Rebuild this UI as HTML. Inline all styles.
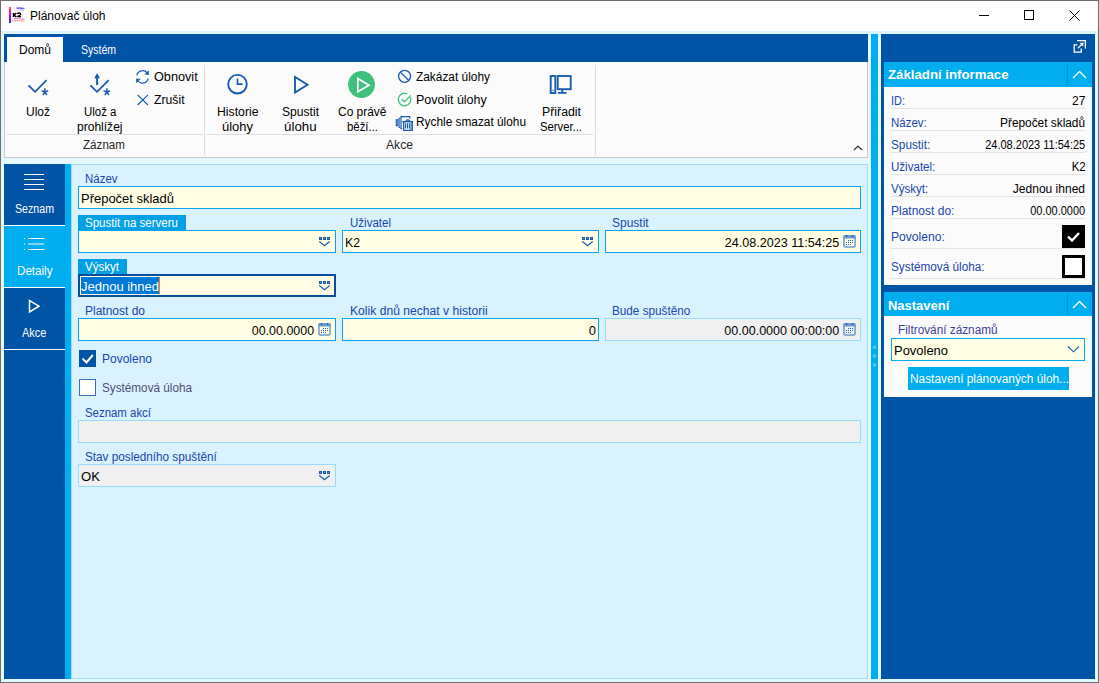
<!DOCTYPE html>
<html><head><meta charset="utf-8"><style>
html,body{margin:0;padding:0;width:1099px;height:683px;overflow:hidden;background:#fff;}
body{position:relative;font-family:"Liberation Sans",sans-serif;}
.a{position:absolute;}
.t{white-space:nowrap;}
svg.a{overflow:visible;}
</style></head><body>
<div class="a" style="left:0px;top:0px;width:1099px;height:683px;background:#6e6e6e;"></div>
<div class="a" style="left:1px;top:1px;width:1097px;height:681px;background:#e4f8ff;"></div>
<div class="a" style="left:1px;top:1px;width:1097px;height:30px;background:#ffffff;"></div>
<div class="a" style="left:1px;top:31px;width:1097px;height:2px;background:#d8f4fd;"></div>
<svg class="a" style="left:9px;top:7px" width="16" height="16" viewBox="0 0 16 16"><defs><linearGradient id="g1" x1="0" y1="0" x2="0" y2="1"><stop offset="0" stop-color="#f55"/><stop offset="0.5" stop-color="#d0d"/><stop offset="1" stop-color="#22e"/></linearGradient></defs><rect x="2" y="0.5" width="13.5" height="15" fill="#f6f5fa"/><rect x="0" y="0" width="2" height="16" fill="url(#g1)"/><path d="M7.5 1.2 Q11 0.6 15.5 1.6" stroke="#66e" stroke-width="1.4" fill="none"/><path d="M10.5 2.6 Q13 2.6 15 3.6" stroke="#b9f" stroke-width="0.8" fill="none"/><path d="M5 11.5 Q9 10.5 15.5 12.5" stroke="#f6c" stroke-width="0.9" fill="none"/><path d="M2.5 14 Q9 13 15.5 14" stroke="#fa8" stroke-width="1" fill="none"/><path d="M4.5 6 V10 M7.4 6 L5.1 8 L7.4 10" stroke="#000" stroke-width="1.4" fill="none"/><path d="M8.3 6.7 Q9 6 10.2 6 Q11.6 6 11.6 7.2 Q11.6 8 8.3 9.6 H12" stroke="#000" stroke-width="1.3" fill="none"/></svg>
<div class="a t" style="top:7.84px;font-size:12px;line-height:16px;color:#000;left:29.5px;transform-origin:left 50%;transform:scaleX(1.0015)">Plánovač úloh</div>
<svg class="a" style="left:970px;top:0px" width="129" height="31"><path d="M9 15.5h10" stroke="#000" stroke-width="1"/><rect x="54.5" y="10.5" width="9" height="9" fill="none" stroke="#000" stroke-width="1"/><path d="M99.5 10.5l10 10M109.5 10.5l-10 10" stroke="#000" stroke-width="1"/></svg>
<div class="a" style="left:4px;top:34px;width:864px;height:28px;background:#0054a6;"></div>
<div class="a" style="left:7px;top:37px;width:56px;height:25px;background:#fbfbfb;"></div>
<div class="a t" style="top:41.84px;font-size:12px;line-height:16px;color:#000;left:18.5px;transform-origin:left 50%;transform:scaleX(0.9995)">Domů</div>
<div class="a t" style="top:41.84px;font-size:12px;line-height:16px;color:#fff;left:80.5px;transform-origin:left 50%;transform:scaleX(0.8747)">Systém</div>
<div class="a" style="left:4px;top:62px;width:864px;height:96px;background:#fbfbfb;border-left:1px solid #c9c9c9;border-right:1px solid #c9c9c9;border-bottom:1px solid #c9c9c9;box-sizing:border-box;"></div>
<div class="a" style="left:7px;top:134px;width:196px;height:1px;background:#dedede;"></div>
<div class="a" style="left:204px;top:65px;width:1px;height:90px;background:#dedede;"></div>
<div class="a" style="left:207px;top:134px;width:386px;height:1px;background:#dedede;"></div>
<div class="a" style="left:595px;top:65px;width:1px;height:90px;background:#dedede;"></div>
<div class="a t" style="top:103.84px;font-size:12px;line-height:16px;color:#000;left:25.5px;transform-origin:left 50%;transform:scaleX(0.9993)">Ulož</div>
<div class="a t" style="top:103.84px;font-size:12px;line-height:16px;color:#000;left:83.5px;transform-origin:left 50%;transform:scaleX(0.9554)">Ulož a</div>
<div class="a t" style="top:118.84px;font-size:12px;line-height:16px;color:#000;left:77px;transform-origin:left 50%;transform:scaleX(1.0031)">prohlížej</div>
<div class="a t" style="top:68.84px;font-size:12px;line-height:16px;color:#000;left:153.7px;transform-origin:left 50%;transform:scaleX(1.0566)">Obnovit</div>
<div class="a t" style="top:91.84px;font-size:12px;line-height:16px;color:#000;left:153.7px;transform-origin:left 50%;transform:scaleX(1.0200)">Zrušit</div>
<div class="a t" style="top:136.84px;font-size:12px;line-height:16px;color:#262626;left:82.5px;transform-origin:left 50%;transform:scaleX(0.9686)">Záznam</div>
<div class="a t" style="top:103.84px;font-size:12px;line-height:16px;color:#000;left:216.5px;transform-origin:left 50%;transform:scaleX(1.0200)">Historie</div>
<div class="a t" style="top:118.84px;font-size:12px;line-height:16px;color:#000;left:222px;transform-origin:left 50%;transform:scaleX(1.0806)">úlohy</div>
<div class="a t" style="top:103.84px;font-size:12px;line-height:16px;color:#000;left:281.5px;transform-origin:left 50%;transform:scaleX(1.0085)">Spustit</div>
<div class="a t" style="top:118.84px;font-size:12px;line-height:16px;color:#000;left:283.5px;transform-origin:left 50%;transform:scaleX(1.1132)">úlohu</div>
<div class="a t" style="top:103.84px;font-size:12px;line-height:16px;color:#000;left:337.5px;transform-origin:left 50%;transform:scaleX(0.9958)">Co právě</div>
<div class="a t" style="top:118.84px;font-size:12px;line-height:16px;color:#000;left:346.5px;transform-origin:left 50%;transform:scaleX(0.9484)">běží...</div>
<div class="a t" style="top:68.84px;font-size:12px;line-height:16px;color:#000;left:415.5px;transform-origin:left 50%;transform:scaleX(0.9904)">Zakázat úlohy</div>
<div class="a t" style="top:91.84px;font-size:12px;line-height:16px;color:#000;left:415.5px;transform-origin:left 50%;transform:scaleX(1.0390)">Povolit úlohy</div>
<div class="a t" style="top:113.84px;font-size:12px;line-height:16px;color:#000;left:415.5px;transform-origin:left 50%;transform:scaleX(0.9875)">Rychle smazat úlohu</div>
<div class="a t" style="top:103.84px;font-size:12px;line-height:16px;color:#000;left:541.5px;transform-origin:left 50%;transform:scaleX(1.0259)">Přiřadit</div>
<div class="a t" style="top:118.84px;font-size:12px;line-height:16px;color:#000;left:539.5px;transform-origin:left 50%;transform:scaleX(0.9399)">Server...</div>
<div class="a t" style="top:136.84px;font-size:12px;line-height:16px;color:#262626;left:385.5px;transform-origin:left 50%;transform:scaleX(1.0117)">Akce</div>
<svg class="a" style="left:0;top:0" width="868" height="160" fill="none" stroke="#1b5cb0">
<path d="M28.5 85.3 L35.1 91.8 L46.6 80.2" stroke-width="1.8"/>
<path d="M44.9 88.3 V92 M41.6 90.8 L44.9 92 L48.2 90.8 M42.8 95 L44.9 92 L47 95" stroke-width="1.5"/>
<path d="M90.4 85.3 L97 91.8 L108.7 80.2" stroke-width="1.8"/>
<path d="M97.1 85 V77" stroke-width="2"/><path d="M94.2 78.3 L97.1 73 L100 78.3 Z" fill="#1b5cb0" stroke="none"/>
<path d="M106.9 88.3 V92 M103.6 90.8 L106.9 92 L110.2 90.8 M104.8 95 L106.9 92 L109 95" stroke-width="1.5"/>
<path d="M136.8 75.5 A6 6 0 0 1 147.3 72.8" stroke-width="1.15"/><path d="M148.8 70.3 L148.8 75 L144.4 74.6 Z" fill="#1b5cb0" stroke="none"/>
<path d="M148.2 78.5 A6 6 0 0 1 137.7 80.9" stroke-width="1.15"/><path d="M136.1 83.2 L136.1 78.5 L140.5 78.9 Z" fill="#1b5cb0" stroke="none"/>
<path d="M137.6 94.8 L148 105 M148 94.8 L137.6 105" stroke-width="1.15"/>
<circle cx="237.5" cy="84.2" r="9.3" stroke-width="1.9"/><path d="M237.5 78.4 V84.2 H242.6" stroke-width="1.7"/>
<path d="M295 77 V92.5 L307.5 84.7 Z" stroke-width="1.9" stroke-linejoin="miter"/>
<circle cx="361.5" cy="84.5" r="13.4" fill="#3ec17c" stroke="none"/>
<path d="M357.8 78.6 V91.8 L369 85.2 Z" stroke="#fff" stroke-width="1.7"/>
<circle cx="404.6" cy="76.3" r="6" stroke-width="1.3"/><path d="M400.4 72.1 L408.8 80.5" stroke-width="1.3"/>
<path d="M410.5 97.35 A6.3 6.3 0 1 1 407.26 93.79" stroke="#3ec17c" stroke-width="1.3"/><path d="M401.8 99.2 L404.4 101.8 L410.8 95.4" stroke="#3ec17c" stroke-width="1.3"/>
<rect x="396.3" y="119.7" width="1.5" height="6" stroke-width="1.1"/>
<path d="M400.2 118.2 H399.1 V127.5 H400.2" stroke-width="1.1"/>
<path d="M409.7 118.4 V116.7 H401 V128.6 H402.2" stroke-width="1.2"/>
<path d="M402.4 121.7 H413" stroke-width="1.5"/>
<path d="M405.8 121 Q407.8 118.8 409.8 121" stroke-width="1.2"/>
<rect x="409.8" y="122.4" width="2.4" height="7.5" fill="#8cb0dc" stroke="none"/>
<path d="M403.7 122 V130.3 H412.2 V122" stroke-width="1.3"/>
<path d="M405.6 123.3 V128.5 M407.5 123.3 V128.5 M409.4 123.3 V128.5" stroke-width="1.1"/>
<rect x="550.7" y="76" width="4.6" height="17" stroke-width="1.9"/>
<path d="M552.3 90.3 H553.8" stroke-width="1"/>
<rect x="557.7" y="76" width="13" height="13.2" stroke-width="1.9"/>
<path d="M562.2 90 V92.5 M557.9 92.9 H566.6" stroke-width="1.9"/>
<path d="M854 150 L858 146 L862 150" stroke="#333" stroke-width="1.2"/>
</svg>
<div class="a" style="left:871px;top:34px;width:7px;height:645px;background:#00adef;"></div>
<div class="a" style="left:881px;top:34px;width:214px;height:645px;background:#0054a6;"></div>
<div class="a" style="left:4px;top:164px;width:61px;height:515px;background:#0054a6;"></div>
<div class="a" style="left:65px;top:164px;width:6px;height:515px;background:#00adef;"></div>
<div class="a" style="left:4px;top:226px;width:61px;height:61px;background:#00adef;"></div>
<div class="a" style="left:4px;top:225px;width:61px;height:1px;background:#ffffff;"></div>
<div class="a" style="left:4px;top:287px;width:61px;height:1px;background:#ffffff;"></div>
<div class="a" style="left:4px;top:349px;width:61px;height:1px;background:#ffffff;"></div>
<svg class="a" style="left:0;top:160px" width="70" height="200" fill="none" stroke="#fff">
<path d="M24 14.5 H44 M24 19.5 H44 M24 24.5 H44 M24 29.5 H44" stroke-width="1.2"/>
<path d="M28 78.5 H44 M28 84 H44 M28 89.5 H44" stroke-width="1.2"/>
<path d="M24 78.5 H25.2 M24 84 H25.2 M24 89.5 H25.2" stroke-width="1.2"/>
<path d="M29.5 140.5 V152 L39 146.2 Z" stroke-width="1.5"/>
</svg>
<div class="a t" style="top:200.84px;font-size:12px;line-height:16px;color:#fff;left:15px;transform-origin:left 50%;transform:scaleX(0.8857)">Seznam</div>
<div class="a t" style="top:262.84px;font-size:12px;line-height:16px;color:#fff;left:17px;transform-origin:left 50%;transform:scaleX(0.9676)">Detaily</div>
<div class="a t" style="top:324.84px;font-size:12px;line-height:16px;color:#fff;left:21.7px;transform-origin:left 50%;transform:scaleX(0.9180)">Akce</div>
<div class="a" style="left:71px;top:164px;width:797px;height:515px;background:#d9f2fd;box-shadow:inset 0 0 0 1px #9fdcf7;"></div>
<div class="a t" style="top:170.84px;font-size:12px;line-height:16px;color:#2146ae;left:85px;transform-origin:left 50%;transform:scaleX(0.9554)">Název</div>
<div class="a" style="left:78px;top:186px;width:783px;height:23px;background:#fffee4;box-shadow:inset 0 0 0 1px #0aa4f2;"></div>
<div class="a t" style="top:190.00px;font-size:13px;line-height:17px;color:#000;left:81px;transform-origin:left 50%;transform:scaleX(0.9975)">Přepočet skladů</div>
<div class="a" style="left:78px;top:215px;width:108px;height:15px;background:#03a0e6;"></div>
<div class="a t" style="top:214.84px;font-size:12px;line-height:16px;color:#fff;left:84.5px;transform-origin:left 50%;transform:scaleX(0.9616)">Spustit na serveru</div>
<div class="a" style="left:78px;top:230px;width:258px;height:23px;background:#fffee4;box-shadow:inset 0 0 0 1px #0aa4f2;"></div>
<div class="a t" style="top:214.84px;font-size:12px;line-height:16px;color:#2146ae;left:349.5px;transform-origin:left 50%;transform:scaleX(0.9605)">Uživatel</div>
<div class="a" style="left:342px;top:230px;width:257px;height:23px;background:#fffee4;box-shadow:inset 0 0 0 1px #0aa4f2;"></div>
<div class="a t" style="top:234.00px;font-size:13px;line-height:17px;color:#000;left:345px;transform-origin:left 50%;transform:scaleX(0.9430)">K2</div>
<div class="a t" style="top:214.84px;font-size:12px;line-height:16px;color:#2146ae;left:612px;transform-origin:left 50%;transform:scaleX(1.0003)">Spustit</div>
<div class="a" style="left:605px;top:230px;width:256px;height:23px;background:#fffee4;box-shadow:inset 0 0 0 1px #0aa4f2;"></div>
<div class="a t" style="top:234.00px;font-size:13px;line-height:17px;color:#000;right:260px;transform-origin:right 50%;transform:scaleX(0.9676)">24.08.2023 11:54:25</div>
<div class="a" style="left:78px;top:259px;width:49px;height:15px;background:#03a0e6;"></div>
<div class="a t" style="top:258.84px;font-size:12px;line-height:16px;color:#fff;left:85px;transform-origin:left 50%;transform:scaleX(0.9620)">Výskyt</div>
<div class="a" style="left:78px;top:274px;width:258px;height:23px;background:#fffee4;box-shadow:inset 0 0 0 1px #0054a6;box-shadow:inset 0 0 0 2px #0a4f9f;"></div>
<div class="a" style="left:81px;top:277px;width:78px;height:17px;background:#0078d7;"></div>
<div class="a t" style="top:278.00px;font-size:13px;line-height:17px;color:#fff;left:80.7px;transform-origin:left 50%;transform:scaleX(0.9990)">Jednou ihned</div>
<div class="a" style="left:159px;top:277px;width:1px;height:17px;background:#f08020;"></div>
<div class="a t" style="top:302.84px;font-size:12px;line-height:16px;color:#2146ae;left:85px;transform-origin:left 50%;transform:scaleX(0.9992)">Platnost do</div>
<div class="a" style="left:78px;top:318px;width:258px;height:23px;background:#fffee4;box-shadow:inset 0 0 0 1px #0aa4f2;"></div>
<div class="a t" style="top:322.00px;font-size:13px;line-height:17px;color:#000;right:785px;transform-origin:right 50%;transform:scaleX(0.9573)">00.00.0000</div>
<div class="a t" style="top:302.84px;font-size:12px;line-height:16px;color:#2146ae;left:349.5px;transform-origin:left 50%;transform:scaleX(1.0112)">Kolik dnů nechat v historii</div>
<div class="a" style="left:342px;top:318px;width:257px;height:23px;background:#fffee4;box-shadow:inset 0 0 0 1px #0aa4f2;"></div>
<div class="a t" style="top:322.00px;font-size:13px;line-height:17px;color:#000;right:503px;">0</div>
<div class="a t" style="top:302.84px;font-size:12px;line-height:16px;color:#2146ae;left:612px;transform-origin:left 50%;transform:scaleX(0.9767)">Bude spuštěno</div>
<div class="a" style="left:605px;top:318px;width:256px;height:23px;background:#f0f0f0;box-shadow:inset 0 0 0 1px #96dbfa;"></div>
<div class="a t" style="top:322.00px;font-size:13px;line-height:17px;color:#000;right:260px;transform-origin:right 50%;transform:scaleX(0.9641)">00.00.0000 00:00:00</div>
<div class="a" style="left:79px;top:350px;width:17px;height:17px;background:#0054a6;"></div>
<div class="a" style="left:79px;top:379px;width:17px;height:17px;background:#fff;box-shadow:inset 0 0 0 1px #3d6fb6;"></div>
<div class="a t" style="top:350.84px;font-size:12px;line-height:16px;color:#2146ae;left:102px;transform-origin:left 50%;transform:scaleX(0.9991)">Povoleno</div>
<div class="a t" style="top:379.84px;font-size:12px;line-height:16px;color:#524c78;left:102px;transform-origin:left 50%;transform:scaleX(0.9776)">Systémová úloha</div>
<div class="a t" style="top:404.84px;font-size:12px;line-height:16px;color:#2146ae;left:85px;transform-origin:left 50%;transform:scaleX(0.9514)">Seznam akcí</div>
<div class="a" style="left:78px;top:420px;width:783px;height:23px;background:#f0f0f0;box-shadow:inset 0 0 0 1px #96dbfa;"></div>
<div class="a t" style="top:448.84px;font-size:12px;line-height:16px;color:#2146ae;left:85px;transform-origin:left 50%;transform:scaleX(0.9773)">Stav posledního spuštění</div>
<div class="a" style="left:78px;top:464px;width:258px;height:23px;background:#f0f0f0;box-shadow:inset 0 0 0 1px #96dbfa;"></div>
<div class="a t" style="top:468.00px;font-size:13px;line-height:17px;color:#000;left:81px;transform-origin:left 50%;transform:scaleX(1.0108)">OK</div>
<svg class="a" style="left:0;top:0" width="868" height="683"><rect x="319" y="237" width="3" height="3" fill="#1b5cb0"/><rect x="320" y="238" width="1" height="1" fill="#5b8ad0"/><rect x="323" y="237" width="3" height="3" fill="#1b5cb0"/><rect x="324" y="238" width="1" height="1" fill="#5b8ad0"/><rect x="327" y="237" width="3" height="3" fill="#1b5cb0"/><rect x="328" y="238" width="1" height="1" fill="#5b8ad0"/><path d="M319.3 241.6 L324.5 245.7 L329.7 241.6" fill="none" stroke="#1b5cb0" stroke-width="1.25"/><rect x="582" y="237" width="3" height="3" fill="#1b5cb0"/><rect x="583" y="238" width="1" height="1" fill="#5b8ad0"/><rect x="586" y="237" width="3" height="3" fill="#1b5cb0"/><rect x="587" y="238" width="1" height="1" fill="#5b8ad0"/><rect x="590" y="237" width="3" height="3" fill="#1b5cb0"/><rect x="591" y="238" width="1" height="1" fill="#5b8ad0"/><path d="M582.3 241.6 L587.5 245.7 L592.7 241.6" fill="none" stroke="#1b5cb0" stroke-width="1.25"/><rect x="319" y="281" width="3" height="3" fill="#1b5cb0"/><rect x="320" y="282" width="1" height="1" fill="#5b8ad0"/><rect x="323" y="281" width="3" height="3" fill="#1b5cb0"/><rect x="324" y="282" width="1" height="1" fill="#5b8ad0"/><rect x="327" y="281" width="3" height="3" fill="#1b5cb0"/><rect x="328" y="282" width="1" height="1" fill="#5b8ad0"/><path d="M319.3 285.6 L324.5 289.7 L329.7 285.6" fill="none" stroke="#1b5cb0" stroke-width="1.25"/><rect x="319" y="471" width="3" height="3" fill="#1b5cb0"/><rect x="320" y="472" width="1" height="1" fill="#5b8ad0"/><rect x="323" y="471" width="3" height="3" fill="#1b5cb0"/><rect x="324" y="472" width="1" height="1" fill="#5b8ad0"/><rect x="327" y="471" width="3" height="3" fill="#1b5cb0"/><rect x="328" y="472" width="1" height="1" fill="#5b8ad0"/><path d="M319.3 475.6 L324.5 479.7 L329.7 475.6" fill="none" stroke="#1b5cb0" stroke-width="1.25"/><rect x="843.95" y="235.95" width="11.1" height="11" rx="1.2" fill="none" stroke="#6b98d0" stroke-width="1.5"/><rect x="843.3" y="235.3" width="12.4" height="3.2" rx="1" fill="#6b98d0"/><rect x="846" y="235" width="1.2" height="2" fill="#2a5fae"/><rect x="852" y="235" width="1.2" height="2" fill="#2a5fae"/><rect x="848" y="240" width="1" height="1" fill="#2a5fae"/><rect x="850" y="240" width="1" height="1" fill="#2a5fae"/><rect x="852" y="240" width="1" height="1" fill="#2a5fae"/><rect x="846" y="242" width="1" height="1" fill="#2a5fae"/><rect x="848" y="242" width="1" height="1" fill="#2a5fae"/><rect x="850" y="242" width="1" height="1" fill="#2a5fae"/><rect x="852" y="242" width="1" height="1" fill="#2a5fae"/><rect x="846" y="244" width="1" height="1" fill="#2a5fae"/><rect x="848" y="244" width="1" height="1" fill="#2a5fae"/><rect x="850" y="244" width="1" height="1" fill="#2a5fae"/><rect x="318.95" y="323.95" width="11.1" height="11" rx="1.2" fill="none" stroke="#6b98d0" stroke-width="1.5"/><rect x="318.3" y="323.3" width="12.4" height="3.2" rx="1" fill="#6b98d0"/><rect x="321" y="323" width="1.2" height="2" fill="#2a5fae"/><rect x="327" y="323" width="1.2" height="2" fill="#2a5fae"/><rect x="323" y="328" width="1" height="1" fill="#2a5fae"/><rect x="325" y="328" width="1" height="1" fill="#2a5fae"/><rect x="327" y="328" width="1" height="1" fill="#2a5fae"/><rect x="321" y="330" width="1" height="1" fill="#2a5fae"/><rect x="323" y="330" width="1" height="1" fill="#2a5fae"/><rect x="325" y="330" width="1" height="1" fill="#2a5fae"/><rect x="327" y="330" width="1" height="1" fill="#2a5fae"/><rect x="321" y="332" width="1" height="1" fill="#2a5fae"/><rect x="323" y="332" width="1" height="1" fill="#2a5fae"/><rect x="325" y="332" width="1" height="1" fill="#2a5fae"/><rect x="843.95" y="323.95" width="11.1" height="11" rx="1.2" fill="none" stroke="#6b98d0" stroke-width="1.5"/><rect x="843.3" y="323.3" width="12.4" height="3.2" rx="1" fill="#6b98d0"/><rect x="846" y="323" width="1.2" height="2" fill="#2a5fae"/><rect x="852" y="323" width="1.2" height="2" fill="#2a5fae"/><rect x="848" y="328" width="1" height="1" fill="#2a5fae"/><rect x="850" y="328" width="1" height="1" fill="#2a5fae"/><rect x="852" y="328" width="1" height="1" fill="#2a5fae"/><rect x="846" y="330" width="1" height="1" fill="#2a5fae"/><rect x="848" y="330" width="1" height="1" fill="#2a5fae"/><rect x="850" y="330" width="1" height="1" fill="#2a5fae"/><rect x="852" y="330" width="1" height="1" fill="#2a5fae"/><rect x="846" y="332" width="1" height="1" fill="#2a5fae"/><rect x="848" y="332" width="1" height="1" fill="#2a5fae"/><rect x="850" y="332" width="1" height="1" fill="#2a5fae"/><path d="M82.5 358.5 L86.5 362.5 L92.8 355" fill="none" stroke="#fff" stroke-width="2"/></svg>
<svg class="a" style="left:1066px;top:34px" width="28" height="26" fill="none" stroke="#fff" stroke-width="1.3">
<path d="M11.4 10.9 H8.2 V18.1 H15.3 V14.6"/><path d="M11 6.6 H19.4 V14.6"/><path d="M11.9 14.2 L16 10.1"/><path d="M17.6 8.6 L13.6 9.1 L17.1 12.6 Z" fill="#fff" stroke="none"/>
</svg>
<div class="a" style="left:884px;top:62px;width:208px;height:25px;background:#00adef;"></div>
<div class="a" style="left:1067px;top:64px;width:1px;height:21px;background:#0a8fd6;"></div>
<svg class="a" style="left:1070px;top:66px" width="20" height="16" fill="none" stroke="#fff" stroke-width="1.4"><path d="M3 12 L9.5 5.5 L16 12"/></svg>
<div class="a t" style="top:66.00px;font-size:13px;line-height:17px;color:#fff;font-weight:700;left:887.5px;transform-origin:left 50%;transform:scaleX(1.0170)">Základní informace</div>
<div class="a" style="left:884px;top:87px;width:208px;height:198px;background:#fbfbfb;"></div>
<div class="a t" style="top:92.84px;font-size:12px;line-height:16px;color:#2146ae;left:890.5px;transform-origin:left 50%;transform:scaleX(0.9124)">ID:</div>
<div class="a t" style="top:92.84px;font-size:12px;line-height:16px;color:#000;right:13.5px;transform-origin:right 50%;transform:scaleX(1.0030)">27</div>
<div class="a" style="left:891px;top:108px;width:194px;height:1px;background:#e3e3e3;"></div>
<div class="a t" style="top:114.84px;font-size:12px;line-height:16px;color:#2146ae;left:890.5px;transform-origin:left 50%;transform:scaleX(0.9556)">Název:</div>
<div class="a t" style="top:114.84px;font-size:12px;line-height:16px;color:#000;right:13.5px;transform-origin:right 50%;transform:scaleX(0.9877)">Přepočet skladů</div>
<div class="a" style="left:891px;top:130px;width:194px;height:1px;background:#e3e3e3;"></div>
<div class="a t" style="top:136.84px;font-size:12px;line-height:16px;color:#2146ae;left:890.5px;transform-origin:left 50%;transform:scaleX(0.9817)">Spustit:</div>
<div class="a t" style="top:136.84px;font-size:12px;line-height:16px;color:#000;right:13.5px;transform-origin:right 50%;transform:scaleX(0.9156)">24.08.2023 11:54:25</div>
<div class="a" style="left:891px;top:152px;width:194px;height:1px;background:#e3e3e3;"></div>
<div class="a t" style="top:158.84px;font-size:12px;line-height:16px;color:#2146ae;left:890.5px;transform-origin:left 50%;transform:scaleX(0.9627)">Uživatel:</div>
<div class="a t" style="top:158.84px;font-size:12px;line-height:16px;color:#000;right:13.5px;transform-origin:right 50%;transform:scaleX(0.9532)">K2</div>
<div class="a" style="left:891px;top:174px;width:194px;height:1px;background:#e3e3e3;"></div>
<div class="a t" style="top:180.84px;font-size:12px;line-height:16px;color:#2146ae;left:890.5px;transform-origin:left 50%;transform:scaleX(0.9645)">Výskyt:</div>
<div class="a t" style="top:180.84px;font-size:12px;line-height:16px;color:#000;right:13.5px;transform-origin:right 50%;transform:scaleX(1.0031)">Jednou ihned</div>
<div class="a" style="left:891px;top:196px;width:194px;height:1px;background:#e3e3e3;"></div>
<div class="a t" style="top:202.84px;font-size:12px;line-height:16px;color:#2146ae;left:890.5px;transform-origin:left 50%;transform:scaleX(1.0004)">Platnost do:</div>
<div class="a t" style="top:202.84px;font-size:12px;line-height:16px;color:#000;right:13.5px;transform-origin:right 50%;transform:scaleX(0.9124)">00.00.0000</div>
<div class="a" style="left:891px;top:218px;width:194px;height:1px;background:#e3e3e3;"></div>
<div class="a t" style="top:228.84px;font-size:12px;line-height:16px;color:#2146ae;left:890.5px;transform-origin:left 50%;transform:scaleX(1.0080)">Povoleno:</div>
<div class="a" style="left:891px;top:248px;width:194px;height:1px;background:#e3e3e3;"></div>
<div class="a" style="left:1062px;top:225px;width:23px;height:23px;background:#000;"></div>
<svg class="a" style="left:1062px;top:225px" width="23" height="23"><path d="M6 11.5 L10 15.5 L17 8" fill="none" stroke="#fff" stroke-width="2.4"/></svg>
<div class="a t" style="top:258.84px;font-size:12px;line-height:16px;color:#2146ae;left:890.5px;transform-origin:left 50%;transform:scaleX(0.9812)">Systémová úloha:</div>
<div class="a" style="left:891px;top:278px;width:194px;height:1px;background:#e3e3e3;"></div>
<div class="a" style="left:1062px;top:255px;width:23px;height:23px;background:#fff;box-shadow:inset 0 0 0 3px #000;"></div>
<div class="a" style="left:884px;top:292px;width:208px;height:24px;background:#00adef;"></div>
<div class="a" style="left:1067px;top:294px;width:1px;height:20px;background:#0a8fd6;"></div>
<svg class="a" style="left:1070px;top:296px" width="20" height="16" fill="none" stroke="#fff" stroke-width="1.4"><path d="M3 12 L9.5 5.5 L16 12"/></svg>
<div class="a t" style="top:297.00px;font-size:13px;line-height:17px;color:#fff;font-weight:700;left:888px;transform-origin:left 50%;transform:scaleX(0.9980)">Nastavení</div>
<div class="a" style="left:884px;top:316px;width:208px;height:81px;background:#fbfbfb;"></div>
<div class="a t" style="top:322.34px;font-size:12px;line-height:16px;color:#3d3f9e;left:897.5px;transform-origin:left 50%;transform:scaleX(0.9825)">Filtrování záznamů</div>
<div class="a" style="left:891px;top:338px;width:194px;height:23px;background:#fffee4;box-shadow:inset 0 0 0 1px #00adef;"></div>
<div class="a t" style="top:341.50px;font-size:13px;line-height:17px;color:#000;left:893.5px;transform-origin:left 50%;transform:scaleX(0.9960)">Povoleno</div>
<svg class="a" style="left:1065px;top:343px" width="16" height="12" fill="none" stroke="#1b5cb0" stroke-width="1.1"><path d="M3 3.5 L8.5 8.8 L14 3.5"/></svg>
<div class="a" style="left:908px;top:367px;width:161px;height:23px;background:#00adef;"></div>
<div class="a t" style="top:371.34px;font-size:12px;line-height:16px;color:#fff;left:909.5px;transform-origin:left 50%;transform:scaleX(0.9889)">Nastavení plánovaných úloh...</div>
<svg class="a" style="left:871px;top:340px" width="7" height="30"><circle cx="3.5" cy="7.2" r="1.9" fill="#4fc4f2"/><circle cx="3.5" cy="16" r="1.9" fill="#4fc4f2"/><circle cx="3.5" cy="25" r="1.9" fill="#4fc4f2"/></svg>
</body></html>
